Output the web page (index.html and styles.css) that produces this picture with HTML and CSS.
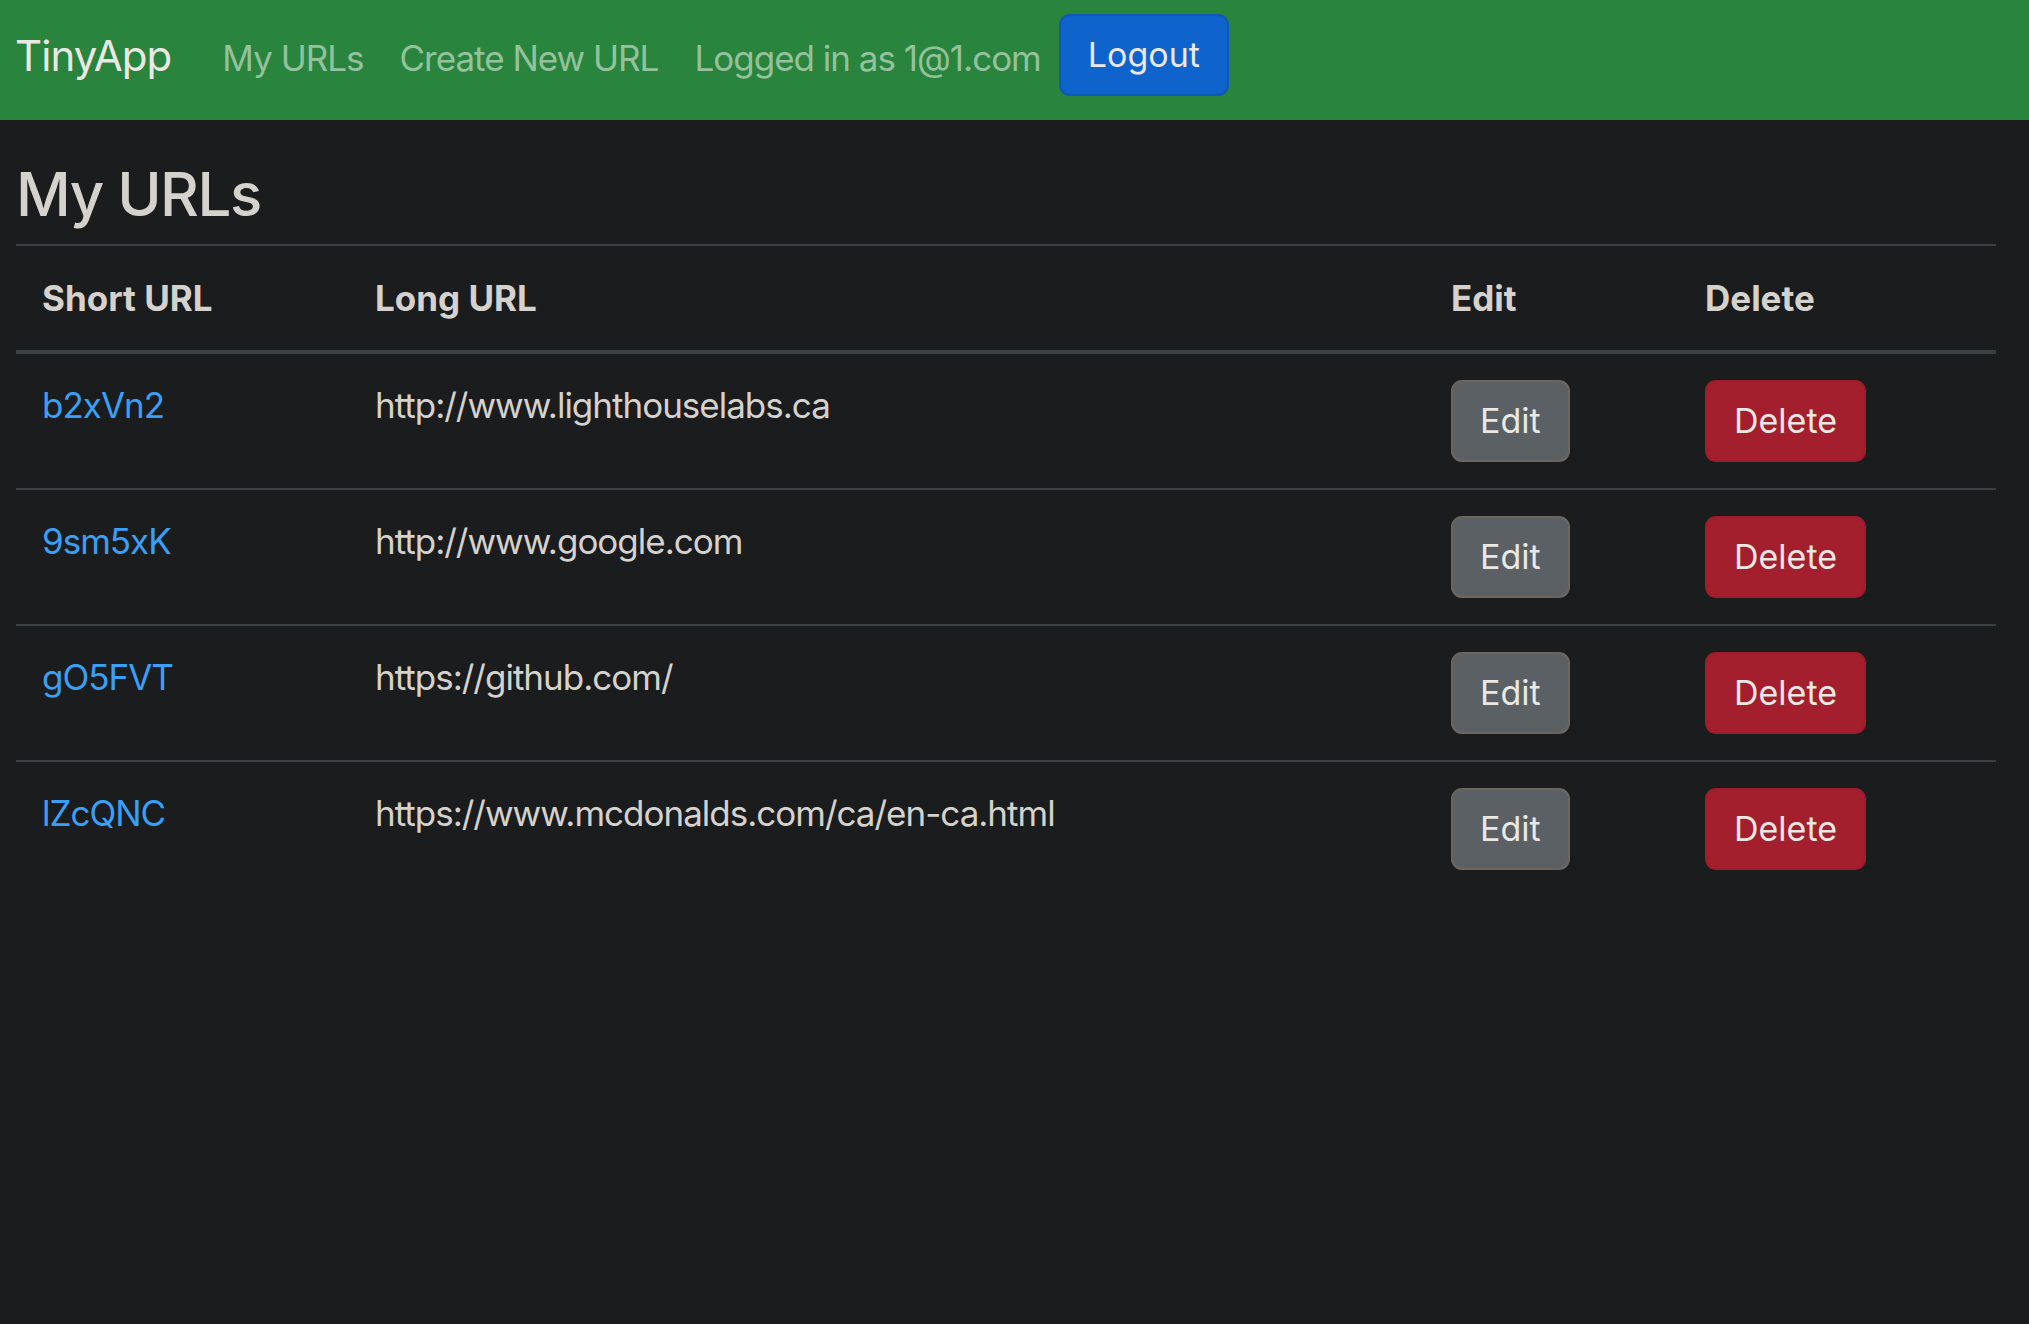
FILE: index.html
```html
<!DOCTYPE html>
<html lang="en">
<head>
<meta charset="utf-8">
<title>TinyApp - My URLs</title>
<link rel="stylesheet" href="styles.css">
</head>
<body>
<nav class="navbar">
  <a class="brand" href="#">TinyApp</a>
  <a class="nav-link" href="#">My URLs</a>
  <a class="nav-link" href="#">Create New URL</a>
  <span class="nav-text">Logged in as 1@1.com</span>
  <button class="btn btn-primary" type="button">Logout</button>
</nav>
<main class="container">
  <h1 class="title">My URLs</h1>
  <table class="url-table">
    <colgroup>
      <col class="col-short">
      <col class="col-long">
      <col class="col-edit">
      <col class="col-delete">
    </colgroup>
    <thead>
      <tr>
        <th>Short URL</th>
        <th>Long URL</th>
        <th>Edit</th>
        <th>Delete</th>
      </tr>
    </thead>
    <tbody>
      <tr>
        <td><a class="short-link" href="#">b2xVn2</a></td>
        <td>http://www.lighthouselabs.ca</td>
        <td><button class="btn btn-secondary" type="button">Edit</button></td>
        <td><button class="btn btn-danger" type="button">Delete</button></td>
      </tr>
      <tr>
        <td><a class="short-link" href="#">9sm5xK</a></td>
        <td>http://www.google.com</td>
        <td><button class="btn btn-secondary" type="button">Edit</button></td>
        <td><button class="btn btn-danger" type="button">Delete</button></td>
      </tr>
      <tr>
        <td><a class="short-link" href="#">gO5FVT</a></td>
        <td>https://github.com/</td>
        <td><button class="btn btn-secondary" type="button">Edit</button></td>
        <td><button class="btn btn-danger" type="button">Delete</button></td>
      </tr>
      <tr class="last-row">
        <td><a class="short-link" href="#">lZcQNC</a></td>
        <td>https://www.mcdonalds.com/ca/en-ca.html</td>
        <td><button class="btn btn-secondary" type="button">Edit</button></td>
        <td><button class="btn btn-danger" type="button">Delete</button></td>
      </tr>
    </tbody>
  </table>
</main>
</body>
</html>
```

FILE: styles.css
```css
* {
  box-sizing: border-box;
}

html, body {
  margin: 0;
  padding: 0;
  height: 100%;
}

body {
  background: #1b1c1e;
  color: #d5d1cc;
  font-family: Inter, "Noto Sans", "Liberation Sans", sans-serif;
  font-size: 35px;
  letter-spacing: -1px;
  line-height: 52px;
}

a {
  text-decoration: none;
}

.navbar {
  display: flex;
  align-items: center;
  height: 120px;
  padding: 14px 16px 24px 15px;
  background: #29843e;
}

.brand {
  color: #ebe8e4;
  font-size: 42px;
  letter-spacing: -0.9px;
  line-height: 1.5;
  margin-right: 33px;
}

.nav-link,
.nav-text {
  color: #94c29d;
  padding: 6px 18px 0;
}

.btn {
  font-family: inherit;
  font-size: 34px;
  letter-spacing: 0;
  line-height: 52px;
  padding: 13px 27px;
  border-width: 2px;
  border-style: solid;
  border-radius: 11px;
  color: #ebe8e4;
  cursor: pointer;
}

.btn-primary {
  background: #0f63cc;
  border-color: #0d58b8;
}

.btn-secondary {
  background: #5a6064;
  border-color: #6c665e;
}

.btn-danger {
  background: #a31f2e;
  border-color: #9d1d2b;
}

.container {
  padding: 0 33px 0 16px;
}

.title {
  margin: 38px 0 14px;
  font-size: 60px;
  letter-spacing: -1.5px;
  font-weight: 500;
  line-height: 72px;
  color: #d5d1cc;
}

.url-table {
  width: 100%;
  border-collapse: collapse;
  border-top: 2px solid #3a4142;
}

.col-short { width: 333px; }
.col-long { width: 1076px; }
.col-edit { width: 254px; }
.col-delete { width: auto; }

.url-table th {
  text-align: left;
  font-weight: 700;
  letter-spacing: 0;
  padding: 26px 26px 26px;
  border-bottom: 4px solid #3a4142;
  vertical-align: bottom;
}

.url-table td {
  padding: 25px 26px 17px;
  vertical-align: top;
  border-bottom: 2px solid #3a4142;
}

.url-table .last-row td {
  border-bottom: none;
}

.url-table td .btn {
  margin: 1px 0 9px;
  display: inline-block;
}

.short-link {
  color: #39a0f5;
}
```
